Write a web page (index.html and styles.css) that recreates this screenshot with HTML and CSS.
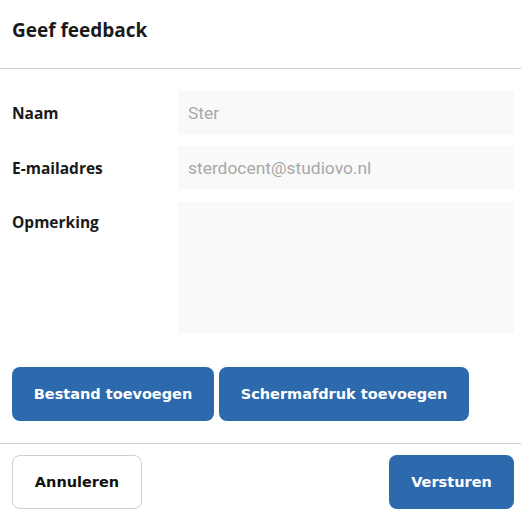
FILE: index.html
```html
<!DOCTYPE html>
<html lang="nl">
<head>
<meta charset="utf-8">
<title>Geef feedback</title>
<link rel="stylesheet" href="styles.css">
</head>
<body>
<div class="dialog">
  <header class="head"><h1 class="title">Geef feedback</h1></header>
  <div class="body">
    <div class="row">
      <label class="label">Naam</label>
      <div class="field">Ster</div>
    </div>
    <div class="row">
      <label class="label">E-mailadres</label>
      <div class="field">sterdocent@studiovo.nl</div>
    </div>
    <div class="row">
      <label class="label">Opmerking</label>
      <div class="field area"></div>
    </div>
    <div class="attach">
      <button class="btn primary">Bestand toevoegen</button>
      <button class="btn primary">Schermafdruk toevoegen</button>
    </div>
  </div>
  <footer class="foot">
    <button class="btn ghost">Annuleren</button>
    <button class="btn primary">Versturen</button>
  </footer>
</div>
</body>
</html>
```
FILE: styles.css
```css
* { box-sizing: border-box; }
html, body { margin: 0; padding: 0; background: #fff; }
.dialog { width: 521px; font-family: "Open Sans", "Noto Sans", sans-serif; color: #1a1a1a; }
.head { height: 69px; border-bottom: 1px solid #cfcfcf; padding: 0 12px; display: flex; align-items: center; }
.title { margin: 0; font-size: 19px; font-weight: 700; line-height: 1; position: relative; top: -4px; }
.body { padding: 22px 7px 22px 12px; display: flex; flex-direction: column; gap: 11px; border-bottom: 1px solid #cfcfcf; }
.row { display: flex; align-items: flex-start; }
.label { width: 166px; flex: none; font-size: 15.5px; font-weight: 700; line-height: 44px; }
.field { flex: 1; height: 44px; background: #f9f9f9; padding: 0 10px; font-family: Roboto, sans-serif; font-size: 17.4px; color: #a8a8a8; line-height: 44px; }
.row:nth-child(2) .field { height: 43px; }
.field.area { height: 131px; }
.row:nth-child(3) { margin-top: 1px; }
.row:nth-child(3) .label { line-height: 40px; }
.attach { display: flex; gap: 5px; margin-top: 23px; }
.btn { height: 54px; border-radius: 8px; font-family: Tahoma, "DejaVu Sans", sans-serif; font-weight: 700; font-size: 14.5px; padding: 0 22px; cursor: pointer; }
.primary { background: #2d6aad; color: #fff; border: none; }
.attach .btn:first-child { width: 202px; padding: 0; }
.attach .btn:last-child { width: 250px; padding: 0; }
.ghost { background: #fff; color: #111; border: 1px solid #cfcfcf; width: 130px; padding: 0; }
.foot { display: flex; justify-content: space-between; padding: 11px 7px 4px 12px; }
.foot .primary { width: 125px; padding: 0; }
```
